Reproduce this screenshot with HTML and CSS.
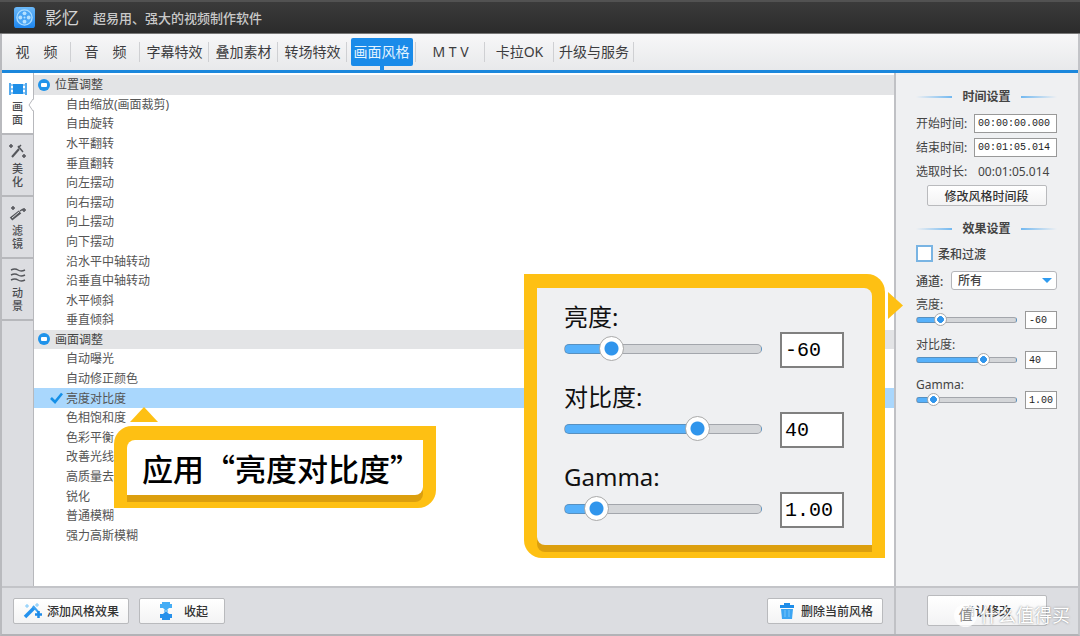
FILE: index.html
```
<!DOCTYPE html>
<html lang="zh-CN">
<head>
<meta charset="utf-8">
<title>影忆</title>
<link rel="stylesheet" href="styles.css">
</head>
<body>
<div class="app">
  <header class="titlebar">
    <svg class="logo" viewBox="0 0 22 22" aria-hidden="true">
      <defs><linearGradient id="lg" x1="0" y1="0" x2="0" y2="1"><stop offset="0" stop-color="#6bb8f8"/><stop offset="1" stop-color="#1d86f0"/></linearGradient></defs>
      <rect width="22" height="22" rx="3" fill="url(#lg)"/>
      <circle cx="11" cy="11" r="8" fill="#4aa5f5" stroke="#a9dbff" stroke-width="1.4"/>
      <g fill="#b5e0ff"><circle cx="11" cy="6.6" r="2"/><circle cx="11" cy="15.4" r="2"/><circle cx="6.6" cy="11" r="2"/><circle cx="15.4" cy="11" r="2"/><circle cx="11" cy="11" r="1"/></g>
    </svg>
    <h1 class="brand">影忆</h1>
    <p class="slogan">超易用、强大的视频制作软件</p>
  </header>

  <nav class="tabs">
    <button class="tab" type="button"><span class="tab-label">视&emsp;频</span></button>
    <button class="tab" type="button"><span class="tab-label">音&emsp;频</span></button>
    <button class="tab" type="button"><span class="tab-label">字幕特效</span></button>
    <button class="tab" type="button"><span class="tab-label">叠加素材</span></button>
    <button class="tab" type="button"><span class="tab-label">转场特效</span></button>
    <button class="tab tab-active" type="button"><span class="tab-label">画面风格</span></button>
    <button class="tab" type="button"><span class="tab-label">M T V</span></button>
    <button class="tab" type="button"><span class="tab-label">卡拉OK</span></button>
    <button class="tab" type="button"><span class="tab-label">升级与服务</span></button>
  </nav>

  <div class="workspace">
    <aside class="rail">
      <button class="rail-item rail-active" type="button">
        <svg class="rail-icon" viewBox="0 0 18 16" aria-hidden="true"><path d="M1 2v12M17 2v12" stroke="#1e8fe8" stroke-width="1.5"/><rect x="4" y="3" width="10" height="10" fill="#1e8fe8"/><path d="M2 4h14M2 8h2M14 8h2M2 12h14" stroke="#1e8fe8"/></svg>
        <span class="rail-text">画面</span>
      </button>
      <button class="rail-item" type="button">
        <svg class="rail-icon" viewBox="0 0 18 16" fill="none" stroke="#55575c" aria-hidden="true"><path d="M3 14l7-8" stroke-width="2"/><path d="M9 3l5 6M9 5l3-3M2 1v4M0 3h4M15 11v4M13 13h4" stroke-width="1.5"/></svg>
        <span class="rail-text">美化</span>
      </button>
      <button class="rail-item" type="button">
        <svg class="rail-icon" viewBox="0 0 18 16" fill="none" stroke="#55575c" aria-hidden="true"><path d="M2 14l9-7" stroke-width="4"/><path d="M3 13l7-6" stroke="#dcdde1"/><path d="M11 6l3-2M4 1v4M2 3h4M15 3v4M13 5h4" stroke-width="1.5"/></svg>
        <span class="rail-text">滤镜</span>
      </button>
      <button class="rail-item" type="button">
        <svg class="rail-icon" viewBox="0 0 18 16" fill="none" stroke="#55575c" aria-hidden="true"><path d="M2 3q4-2 7 0t7 0M2 8q4-2 7 0t7 0M2 13q4-2 7 0t7 0" stroke-width="1.4"/></svg>
        <span class="rail-text">动景</span>
      </button>
      <svg class="rail-notch" viewBox="0 0 6 12" aria-hidden="true"><path d="M6 0L1 6l5 6z" fill="#fff"/><path d="M5 0L1 6l4 6" fill="none" stroke="#b7b8bc"/></svg>
    </aside>

    <main class="effects">
      <ul class="effect-list">
        <li class="group"><svg class="minus" viewBox="0 0 12 12" aria-hidden="true"><circle cx="6" cy="6" r="6" fill="#2093ea"/><rect x="3" y="4" width="6" height="4" rx="1" fill="#fff"/></svg>位置调整</li>
        <li class="effect">自由缩放(画面裁剪)</li>
        <li class="effect">自由旋转</li>
        <li class="effect">水平翻转</li>
        <li class="effect">垂直翻转</li>
        <li class="effect">向左摆动</li>
        <li class="effect">向右摆动</li>
        <li class="effect">向上摆动</li>
        <li class="effect">向下摆动</li>
        <li class="effect">沿水平中轴转动</li>
        <li class="effect">沿垂直中轴转动</li>
        <li class="effect">水平倾斜</li>
        <li class="effect">垂直倾斜</li>
        <li class="group"><svg class="minus" viewBox="0 0 12 12" aria-hidden="true"><circle cx="6" cy="6" r="6" fill="#2093ea"/><rect x="3" y="4" width="6" height="4" rx="1" fill="#fff"/></svg>画面调整</li>
        <li class="effect">自动曝光</li>
        <li class="effect">自动修正颜色</li>
        <li class="effect effect-selected"><svg class="tick" viewBox="0 0 14 12" aria-hidden="true"><path d="M1.500 6l4 4L12.500 1.500" fill="none" stroke="#1590e8" stroke-width="2.600"/></svg>亮度对比度</li>
        <li class="effect">色相饱和度</li>
        <li class="effect">色彩平衡</li>
        <li class="effect">改善光线</li>
        <li class="effect">高质量去噪</li>
        <li class="effect">锐化</li>
        <li class="effect">普通模糊</li>
        <li class="effect">强力高斯模糊</li>
      </ul>
    </main>

    <aside class="settings">
      <h2 class="section-title">时间设置</h2>
      <div class="time-row"><label class="field-label" for="start">开始时间:</label><input class="time-input" id="start" value="00:00:00.000"></div>
      <div class="time-row"><label class="field-label" for="end">结束时间:</label><input class="time-input" id="end" value="00:01:05.014"></div>
      <div class="time-row"><span class="field-label">选取时长:</span><output class="duration">00:01:05.014</output></div>
      <button class="btn btn-range" type="button">修改风格时间段</button>
      <h2 class="section-title">效果设置</h2>
      <label class="check-row"><input class="check" type="checkbox">柔和过渡</label>
      <div class="channel-row">
        <label class="field-label" for="channel">通道:</label>
        <select class="channel" id="channel"><option>所有</option></select>
      </div>
      <div class="adjust">
        <label class="adjust-label" for="b1">亮度:</label>
        <input class="slider" id="b1" type="range" min="-100" max="100" value="-60" style="--v:.2">
        <input class="value" aria-label="亮度值" value="-60">
      </div>
      <div class="adjust">
        <label class="adjust-label" for="c1">对比度:</label>
        <input class="slider" id="c1" type="range" min="-100" max="100" value="40" style="--v:.7">
        <input class="value" aria-label="对比度值" value="40">
      </div>
      <div class="adjust">
        <label class="adjust-label" for="g1">Gamma:</label>
        <input class="slider" id="g1" type="range" min="0" max="9" step="0.01" value="1" style="--v:.11">
        <input class="value" aria-label="Gamma值" value="1.00">
      </div>
    </aside>
  </div>

  <footer class="actions">
    <div class="actions-main">
      <button class="btn btn-wide" type="button">
        <svg class="btn-icon" viewBox="0 0 20 18" aria-hidden="true"><path d="M2 15l9-9" stroke="#2492ee" stroke-width="3.500"/><path d="M10 4l6 7" stroke="#3aa0f0" stroke-width="2"/><path d="M15.500 9v7M12 12.500h7" stroke="#1d8be8" stroke-width="2.500"/><path d="M4 2v4M2 4h4M14 1v4M12 3h4" stroke="#7cc8fa"/></svg>
        添加风格效果
      </button>
      <button class="btn btn-fold" type="button">
        <svg class="btn-icon" viewBox="0 0 20 18" aria-hidden="true"><path d="M6 0h8v2h2v4h-3l-2 2H9L7 6H4V2h2z" fill="#45adf5"/><path d="M8 8h4v2H8z" fill="#7fc7f8"/><path d="M9 10h2l2 2h3v4h-2v2H6v-2H4v-4h3z" fill="#2791eb"/></svg>
        收起
      </button>
      <button class="btn btn-wide btn-delete" type="button">
        <svg class="btn-icon" viewBox="0 0 20 18" aria-hidden="true"><path d="M7 1h6v2h4v3H3V3h4z" fill="#1e8de9"/><path d="M4 7h12l-1 10H5z" fill="#3ca5f3"/><path d="M8 8v7M12 8v7" stroke="#79c6fa"/></svg>
        删除当前风格
      </button>
    </div>
    <div class="actions-side"><button class="btn btn-confirm" type="button">确认修改</button></div>
  </footer>

  <section class="callout callout-apply"><div class="callout-body apply-body">应用“亮度对比度”</div></section>

  <section class="callout callout-zoom">
    <div class="callout-body zoom-body">
      <div class="adjust adjust-large">
        <label class="adjust-label" for="b2">亮度:</label>
        <input class="slider" id="b2" type="range" min="-100" max="100" value="-60" style="--v:.2">
        <input class="value" aria-label="亮度值" value="-60">
      </div>
      <div class="adjust adjust-large">
        <label class="adjust-label" for="c2">对比度:</label>
        <input class="slider" id="c2" type="range" min="-100" max="100" value="40" style="--v:.7">
        <input class="value" aria-label="对比度值" value="40">
      </div>
      <div class="adjust adjust-large">
        <label class="adjust-label" for="g2">Gamma:</label>
        <input class="slider" id="g2" type="range" min="0" max="9" step="0.01" value="1" style="--v:.11">
        <input class="value" aria-label="Gamma值" value="1.00">
      </div>
    </div>
  </section>

  <div class="watermark"><span class="watermark-badge">值</span>什么值得买</div>
</div>
</body>
</html>
```

FILE: styles.css
```
* { box-sizing: border-box; }

body {
  margin: 0;
  font-family: "Noto Sans", "Noto Sans CJK SC", sans-serif;
  font-size: 12px;
  color: #444;
}

button, input, select { font: inherit; color: inherit; margin: 0; }

.app {
  position: relative;
  display: flex;
  flex-direction: column;
  min-height: 100vh;
  background: #dcdde1;
  border-left: 2px solid #b9babe;
  border-right: 2px solid #c3c4c8;
  border-bottom: 2px solid #b2b3b7;
}

/* Title bar */
.titlebar {
  display: flex;
  align-items: center;
  height: 34px;
  margin: 0 -2px;
  padding-left: 14px;
  background: linear-gradient(#3b3b3b, #2b2b2b);
  border-top: 2px solid #525252;
  border-bottom: 1px solid #777;
}
.logo { width: 21px; height: 21px; }
.brand { margin: 0 0 0 10px; font-size: 17px; font-weight: 400; line-height: 24px; color: #d5d5d5; }
.slogan { margin: 0 0 0 14px; font-size: 13px; font-weight: 500; color: #c9c9c9; }

/* Tabs */
.tabs {
  display: grid;
  grid-template-columns: repeat(8, minmax(0, 69px)) 80px;
  height: 39px;
  padding-top: 3px;
  background: linear-gradient(#f7f7f8, #e8e9eb);
  border-bottom: 3px solid #1b87dc;
}
.tab {
  position: relative;
  height: 30px;
  padding: 0;
  border: 0;
  background: linear-gradient(#cfd0d3, #cfd0d3) right center / 1px 20px no-repeat;
  font-size: 14px;
  color: #3c3c3e;
}
.tab-label { display: block; line-height: 28px; white-space: nowrap; }
.tab-active .tab-label {
  width: 62px;
  margin: 0 auto;
  border-radius: 2px;
  background: #1a8be9;
  color: #e4f4ff;
}
.tab-active::after {
  content: "";
  position: absolute;
  left: 50%;
  top: 29px;
  width: 4px;
  height: 5px;
  margin-left: -2px;
  background: #1a8be9;
}

/* Workspace */
.workspace { display: flex; flex: 1; }

.rail { position: relative; flex: none; width: 32px; border-right: 1px solid #b7b8bc; }
.rail-item {
  display: flex;
  flex-direction: column;
  align-items: center;
  gap: 3px;
  width: 100%;
  height: 62px;
  padding: 8px 0 0;
  border: 0;
  border-bottom: 2px solid #b7b8bc;
  background: transparent;
}
.rail-active { background: #fff; }
.rail-icon { width: 18px; height: 16px; }
.rail-text { width: 12px; font-size: 11px; line-height: 13px; font-weight: 500; color: #4b4c50; }
.rail-notch { position: absolute; right: -1px; top: 26px; width: 6px; height: 12px; }

.effects { display: flex; flex: 1; background: #fff; }
.effect-list {
  display: grid;
  grid-template-rows: repeat(24, 1fr);
  flex: 1;
  margin: 0;
  padding: 2px 0 41px;
  list-style: none;
  line-height: 19px;
  color: #555;
}
.group { display: flex; align-items: center; gap: 5px; padding-left: 4px; background: #e3e4e6; color: #444; }
.minus { width: 12px; height: 12px; }
.effect { display: flex; align-items: center; padding-left: 32px; }
.effect-selected { gap: 2px; padding-left: 15px; background: #a9d7fd; }
.tick { width: 15px; height: 12px; }

/* Settings */
.settings {
  flex: none;
  width: 184px;
  padding: 14px 21px 0 20px;
  border-left: 2px solid #c0c1c5;
  background: #eff0f2;
}
.section-title {
  display: grid;
  grid-template-columns: 1fr auto 1fr;
  align-items: center;
  gap: 10px;
  margin: 0 0 4px;
  font-size: 12px;
  font-weight: 600;
  line-height: 20px;
  color: #444;
}
.section-title::before,
.section-title::after { content: ""; height: 2px; background: linear-gradient(90deg, transparent, #72b8f0); }
.section-title::after { background: linear-gradient(90deg, #72b8f0, transparent); }
.time-row { display: flex; align-items: center; gap: 6px; height: 24px; }
.field-label { flex: none; width: 52px; white-space: nowrap; }
.time-input, .value {
  min-width: 0;
  border: 1px solid #999;
  background: #fff;
  font-family: "Liberation Mono", monospace;
  font-size: 10px;
  color: #222;
}
.time-input { flex: 1; height: 19px; padding: 0 3px; }
.duration { padding-left: 4px; }

.btn {
  display: inline-flex;
  align-items: center;
  justify-content: center;
  gap: 4px;
  height: 26px;
  padding: 0;
  border: 1px solid #b9babd;
  border-radius: 2px;
  background: linear-gradient(#fff, #f3f3f4);
  font-weight: 500;
  color: #333;
  white-space: nowrap;
}
.btn-range { display: flex; width: 120px; height: 21px; margin: 2px auto 13px; }
.check-row { display: flex; align-items: center; gap: 5px; height: 17px; margin-top: 6px; font-weight: 500; }
.check { appearance: none; width: 17px; height: 17px; border: 2px solid #79b4e3; background: #fff; }
.channel-row { display: flex; align-items: center; gap: 3px; margin: 9px 0 5px; }
.channel-row .field-label { width: 32px; font-weight: 500; }
.channel {
  flex: 1;
  height: 19px;
  padding: 0 6px;
  appearance: none;
  border: 1px solid #b5b6ba;
  border-radius: 3px;
  background: #fff url("data:image/svg+xml,%3Csvg xmlns='http://www.w3.org/2000/svg' viewBox='0 0 10 5'%3E%3Cpath d='M0 0h10L5 5z' fill='%232f9bf0'/%3E%3C/svg%3E") right 4px center / 10px 5px no-repeat;
  font-weight: 500;
}

/* Slider with a label above and a value box beside it */
.adjust {
  --thumb: 13px;
  --bar: 6px;
  display: grid;
  grid-template-columns: 1fr 32px;
  grid-template-rows: 16px 24px;
  align-items: start;
  column-gap: 8px;
}
.adjust-label { grid-column: 1 / -1; line-height: 20px; }
.slider {
  appearance: none;
  width: 100%;
  min-width: 0;
  height: var(--thumb);
  margin-top: 2px;
  background: transparent;
}
.slider::-webkit-slider-runnable-track {
  height: var(--bar);
  border: 1px solid rgba(90, 95, 105, .4);
  border-radius: 5px;
  background: linear-gradient(90deg, #56b1fb calc(var(--thumb) / 2 + (100% - var(--thumb)) * var(--v)), #d4d6d9 0);
}
.slider::-webkit-slider-thumb {
  appearance: none;
  width: var(--thumb);
  height: var(--thumb);
  margin-top: calc((var(--bar) - var(--thumb)) / 2 - 1px);
  border: 1px solid #aaa;
  border-radius: 50%;
  background: radial-gradient(circle, #3095ec 0 40%, #fff 46%);
}
.value { width: 100%; height: 18px; padding: 0 3px; }

.adjust-large {
  --thumb: 25px;
  --bar: 10px;
  grid-template-columns: 1fr 64px;
  grid-template-rows: 27px 53px;
  column-gap: 18px;
  color: #111;
}
.adjust-large .slider { margin-top: 4px; }
.adjust-large .adjust-label { font-size: 24px; line-height: 24px; }
.adjust-large .value { height: 36px; border-width: 2px; border-color: #808080; font-size: 20px; color: #000; }

/* Footer */
.actions { display: flex; height: 48px; border-top: 2px solid #c3c4c8; }
.actions-main { display: flex; flex: 1; align-items: center; gap: 10px; padding: 0 11px; }
.actions-side { width: 184px; padding: 7px 31px 0; border-left: 2px solid #c0c1c5; }
.btn-icon { width: 20px; height: 18px; }
.btn-wide { width: 116px; }
.btn-fold { width: 86px; gap: 8px; }
.btn-delete { margin-left: auto; }
.btn-confirm { width: 100%; height: 31px; }

/* Callouts laid over the workspace */
.callout { position: absolute; padding: 14px 13px 13px; background: #fec013; }
.callout::before { content: ""; position: absolute; background: #fec013; }
.callout-apply { left: 112px; top: 426px; border-radius: 18px 0 18px 0; }
.callout-apply::before { left: 16px; top: -19px; width: 28px; height: 15px; clip-path: polygon(50% 0, 100% 100%, 0 100%); }
.callout-body { box-shadow: 0 7px 0 #dc9f0e; }
.apply-body {
  width: 296px;
  padding: 0 0 0 15px;
  border-radius: 8px 0 8px 0;
  background: #fff;
  font-family: "Noto Sans CJK SC", sans-serif;
  font-size: 31px;
  font-weight: 500;
  line-height: 55px;
  color: #000;
  white-space: nowrap;
  overflow: hidden;
}
.callout-zoom { left: 522px; top: 274px; border-radius: 0 18px 0 18px; }
.callout-zoom::before { right: -18px; top: 18px; width: 15px; height: 27px; clip-path: polygon(0 0, 100% 50%, 0 100%); }
.zoom-body { width: 335px; padding: 17px 28px 0 27px; border-radius: 0 8px 0 8px; background: #eff0f2; }

.watermark {
  position: absolute;
  right: 8px;
  bottom: 7px;
  display: flex;
  align-items: center;
  gap: 3px;
  font-size: 18px;
  line-height: 24px;
  color: #fff;
  text-shadow: 0 0 2px #777;
}
.watermark-badge {
  width: 23px;
  height: 23px;
  border-radius: 50%;
  background: rgba(255, 255, 255, .8);
  font-size: 14px;
  line-height: 22px;
  text-align: center;
  color: #888;
  text-shadow: none;
}
```
